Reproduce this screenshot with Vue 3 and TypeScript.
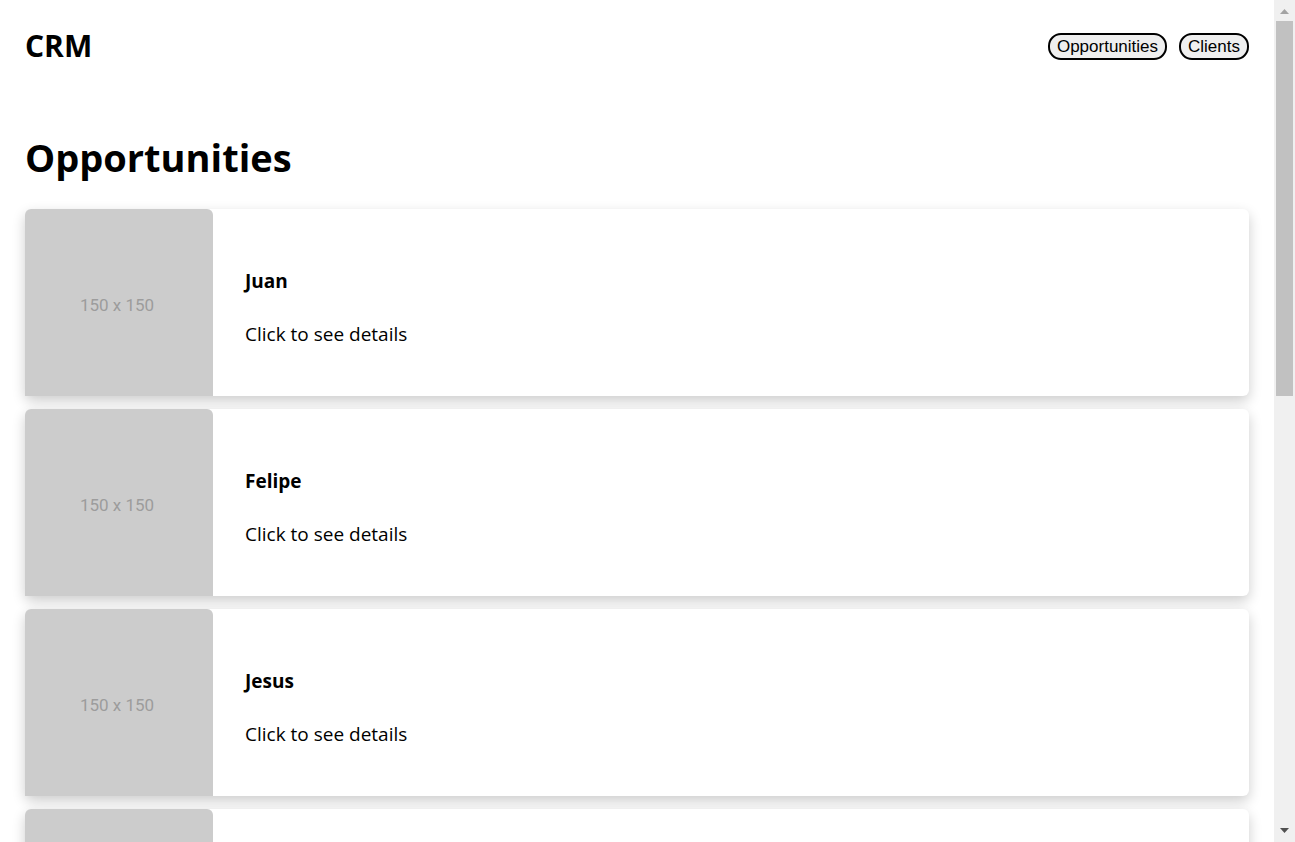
<script setup lang="ts">
interface Opportunity {
  id: number
  client: string
}

const sections: string[] = ['Opportunities', 'Clients']

const opportunities: Opportunity[] = [
  { id: 1, client: 'Juan' },
  { id: 2, client: 'Felipe' },
  { id: 3, client: 'Jesus' },
  { id: 4, client: '' },
]
</script>

<template>
  <div class="window">
    <div class="page">
      <header class="topbar">
        <h2 class="brand">CRM</h2>
        <nav class="nav">
          <button v-for="section in sections" :key="section" type="button" class="nav-button">
            {{ section }}
          </button>
        </nav>
      </header>
      <main>
        <h1 class="title">Opportunities</h1>
        <ul class="cards">
          <li v-for="item in opportunities" :key="item.id" class="card">
            <div class="thumb"><span v-if="item.client" class="size">150 x 150</span></div>
            <div v-if="item.client" class="info">
              <h4 class="name">{{ item.client }}</h4>
              <p class="hint">Click to see details</p>
            </div>
          </li>
        </ul>
      </main>
    </div>
    <div class="scrollbar" aria-hidden="true">
      <svg class="arrow" viewBox="0 0 21 21"><path d="M6 14L10.500 9L15 14Z" fill="#a3a3a3" /></svg>
      <div class="track"><div class="handle"></div></div>
      <svg class="arrow" viewBox="0 0 21 21"><path d="M6 7L10.500 12L15 7Z" fill="#505050" /></svg>
    </div>
  </div>
</template>

<style>
body {
  background: #fff;
}
</style>

<style scoped>
.window {
  display: grid;
  grid-template-columns: 1fr 21px;
  height: 100vh;
  overflow: hidden;
  color: #000;
  font-family: "Segoe UI", "Open Sans", "Noto Sans", sans-serif;
}

.page {
  min-width: 0;
  overflow: hidden;
  padding: 0 25px;
}

.topbar {
  display: flex;
  align-items: center;
  justify-content: space-between;
  height: 93px;
}

.brand {
  margin: 0;
  padding-bottom: 2px;
  font-size: 30px;
  line-height: 40px;
}

.nav {
  display: flex;
  gap: 12px;
}

.nav-button {
  height: 27px;
  padding: 0 7px;
  border: 2px solid #000;
  border-radius: 13px;
  background: #efefef;
  color: #000;
  font-family: Arial, "Liberation Sans", sans-serif;
  font-size: 17px;
  line-height: 20px;
}

.title {
  margin: 38px 0 25px;
  font-size: 38px;
  line-height: 53px;
}

.cards {
  display: grid;
  gap: 13px;
  margin: 0;
  padding: 0;
  list-style: none;
}

.card {
  display: flex;
  height: 187px;
  border-radius: 6px;
  background: #fff;
  box-shadow: 0 5px 13px rgba(0, 0, 0, 0.2);
}

.thumb {
  display: flex;
  flex: none;
  align-items: center;
  justify-content: center;
  width: 188px;
  padding: 4px 4px 0 0;
  box-sizing: border-box;
  border-radius: 6px 6px 0 0;
  background: #ccc;
}

.size {
  color: #9c9c9c;
  font-family: Roboto, sans-serif;
  font-size: 17px;
  line-height: 24px;
}

.info {
  padding: 59px 32px 0;
}

.name {
  margin: 0 0 26px;
  font-size: 19px;
  line-height: 27px;
}

.hint {
  margin: 0;
  font-size: 19px;
  line-height: 27px;
}

.scrollbar {
  display: flex;
  flex-direction: column;
  background: #f0f0f0;
}

.arrow {
  flex: none;
  width: 21px;
  height: 21px;
}

.track {
  flex: 1;
  padding: 0 2px;
}

.handle {
  height: 46.9%;
  background: #c1c1c1;
}
</style>
